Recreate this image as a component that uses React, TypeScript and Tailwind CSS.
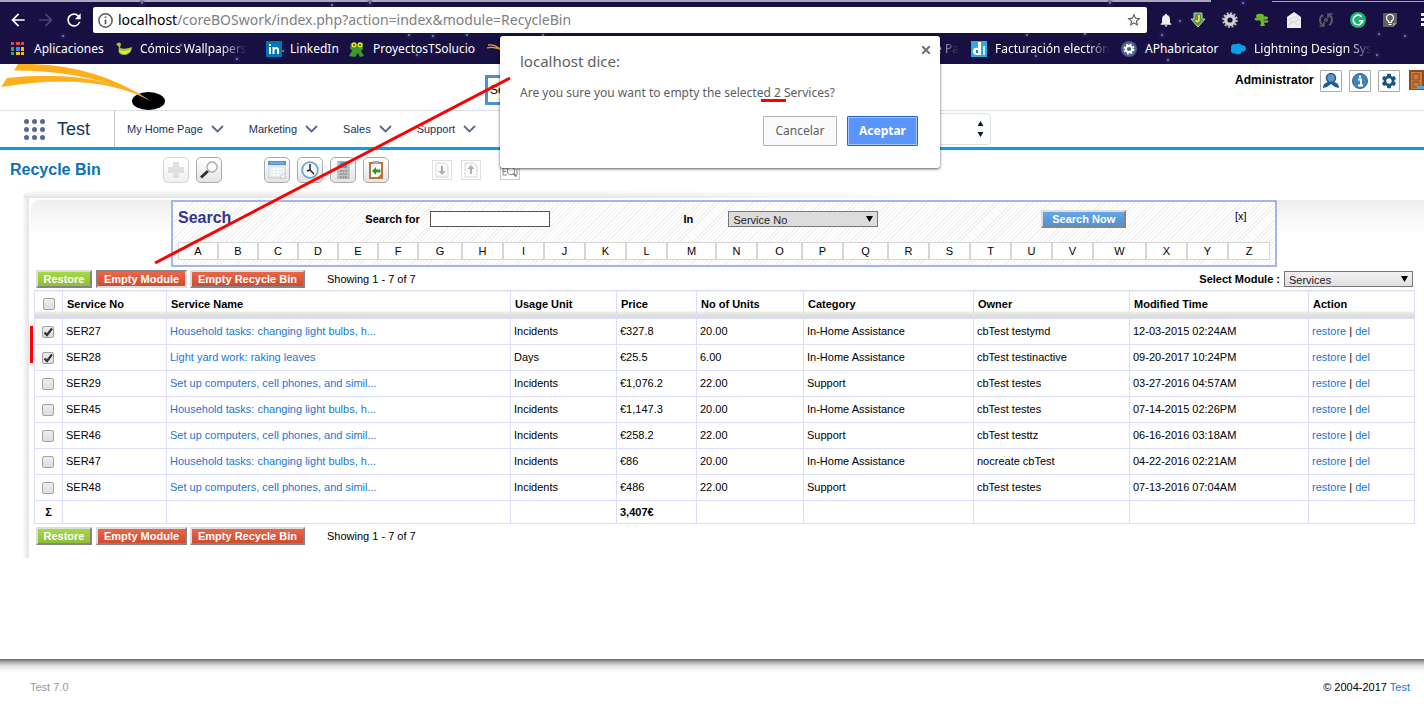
import React from 'react';
import { MdArrowBack, MdArrowForward, MdRefresh, MdStarBorder, MdNotifications, MdSettings } from 'react-icons/md';

const services = [
  ['SER27', 'Household tasks: changing light bulbs, h...', 'Incidents', '€327.8', '20.00', 'In-Home Assistance', 'cbTest testymd', '12-03-2015 02:24AM'],
  ['SER28', 'Light yard work: raking leaves', 'Days', '€25.5', '6.00', 'In-Home Assistance', 'cbTest testinactive', '09-20-2017 10:24PM'],
  ['SER29', 'Set up computers, cell phones, and simil...', 'Incidents', '€1,076.2', '22.00', 'Support', 'cbTest testes', '03-27-2016 04:57AM'],
  ['SER45', 'Household tasks: changing light bulbs, h...', 'Incidents', '€1,147.3', '20.00', 'In-Home Assistance', 'cbTest testes', '07-14-2015 02:26PM'],
  ['SER46', 'Set up computers, cell phones, and simil...', 'Incidents', '€258.2', '22.00', 'Support', 'cbTest testtz', '06-16-2016 03:18AM'],
  ['SER47', 'Household tasks: changing light bulbs, h...', 'Incidents', '€86', '20.00', 'In-Home Assistance', 'nocreate cbTest', '04-22-2016 02:21AM'],
  ['SER48', 'Set up computers, cell phones, and simil...', 'Incidents', '€486', '22.00', 'Support', 'cbTest testes', '07-13-2016 07:04AM'],
];
const columns = ['Service No', 'Service Name', 'Usage Unit', 'Price', 'No of Units', 'Category', 'Owner', 'Modified Time', 'Action'];
const menus = ['My Home Page', 'Marketing', 'Sales', 'Support'];
const letters = 'ABCDEFGHIJKLMNOPQRSTUVWXYZ'.split('');
const stars = [[142, 3], [370, 3], [409, 35], [467, 35], [433, 36], [543, 35], [181, 45], [283, 51], [237, 59], [417, 55], [1110, 3], [1180, 21], [1085, 34], [1162, 35], [1379, 34], [1405, 36], [1027, 35], [1168, 60], [1377, 55], [63, 36], [332, 5], [1243, 3], [1036, 56]];

function BrowserBar() {
  return (
    <div className="relative h-16 overflow-hidden bg-[#180f43] font-['Noto_Sans','Open_Sans',sans-serif] text-white">
      <svg className="absolute inset-0 h-full w-full" aria-hidden="true">
        <path d="M0 0H1211V2H0ZM1272 1H1424V2H1272Z" fill="#a9a6bd" />
        {stars.map(([x, y]) => (
          <g key={x}>
            <circle cx={x} cy={y} r="3" fill="#2b2f70" opacity=".4" />
            <circle cx={x} cy={y} r="1" fill="#8088bb" />
          </g>
        ))}
      </svg>
      <div className="relative mt-[7px] flex h-[26px] items-center pl-2">
        <button aria-label="Back" className="w-7"><MdArrowBack size={20} /></button>
        <button aria-label="Forward" className="w-7 text-[#4d4672]"><MdArrowForward size={20} /></button>
        <button aria-label="Reload" className="w-[29px]"><MdRefresh size={20} /></button>
        <div className="flex h-[26px] flex-1 items-center gap-[5px] rounded-[2px] bg-white px-[5px]">
          <svg width="15" height="15" viewBox="0 0 14 14" fill="none" stroke="#5a5a5a" strokeWidth="1.4"><circle cx="7" cy="7" r="6.2" /><path d="M7 6v4.4M7 3.2v1.5" strokeWidth="1.6" /></svg>
          <div className="flex-1 truncate text-sm text-[#808080]"><span className="text-black">localhost</span>/coreBOSwork/index.php?action=index&amp;module=RecycleBin</div>
          <button aria-label="Bookmark" className="text-[#555]"><MdStarBorder size={16} /></button>
        </div>
        <div className="flex w-[277px] shrink-0 items-center gap-4 overflow-hidden pl-[11px]">
          <MdNotifications size={16} className="shrink-0 text-[#eee]" />
          <svg className="shrink-0" width="16" height="16" viewBox="0 0 16 16"><path d="M4 1h8v6h3l-7 8-7-8h3z" fill="#4f9a48" stroke="#bcd5b5" /><path d="M9 3v5c0 2-3 2-3 0" fill="none" stroke="#ffd24a" strokeWidth="1.8" /></svg>
          <svg className="shrink-0" width="16" height="16" viewBox="0 0 16 16"><circle cx="8" cy="8" r="6.7" fill="none" stroke="#bbb" strokeWidth="2.2" strokeDasharray="2 1.5" /><circle cx="8" cy="8" r="4.3" fill="none" stroke="#d0d0d0" strokeWidth="3.4" /></svg>
          <svg className="shrink-0" width="16" height="16" viewBox="0 0 16 16" fill="#70b62d"><ellipse cx="6" cy="4" rx="4" ry="2.200" /><ellipse cx="11" cy="6" rx="3" ry="1.700" /><ellipse cx="4" cy="7" rx="3.500" ry="1.600" /><ellipse cx="12" cy="9.500" rx="2.500" ry="1.300" /><path d="M7 5h2l1 4 2 0-2 2 1 3H6l1-3-1-3z" /></svg>
          <svg className="shrink-0" width="16" height="16" viewBox="0 0 16 16"><path d="M1 5l7-5 7 5v11H1z" fill="#eee" /><path d="M3 8l6-3 4 3-8 2zM2 13l5-3 6 3" fill="none" stroke="#d8d8d8" /></svg>
          <svg className="shrink-0" width="16" height="16" viewBox="0 0 16 16" fill="none" stroke="#5b5b66" strokeWidth="2"><path d="M5 13.200A6 6 0 0 1 5 2.800M11 2.800A6 6 0 0 1 11 13.200" /><path d="M1.500 14H6v-4M14.500 2H10v4" strokeWidth="1.600" /><circle cx="8" cy="8" r="1.300" strokeWidth="1.500" /></svg>
          <svg className="shrink-0" width="16" height="16" viewBox="0 0 16 16"><circle cx="8" cy="8" r="8" fill="#15b573" /><path d="M11.600 4.800A4.800 4.800 0 1 0 12.700 8.800H9M12.700 8.800L11 11.300" fill="none" stroke="#fff" strokeWidth="1.600" /></svg>
          <svg className="shrink-0" width="16" height="16" viewBox="0 0 16 16"><path d="M1 1h14v10l-4 4H1z" fill="#606060" /><path d="M11 15v-4h4z" fill="#999" /><path d="M6.500 10.500V9a3.500 3.500 0 1 1 3 0v1.500zM6.500 12.500h3" fill="none" stroke="#fff" strokeWidth="1.200" /></svg>
          <svg className="ml-[7px] shrink-0" width="8" height="16" viewBox="0 0 8 16" fill="#eee"><path d="M0 1h3v3H0zM0 6h3v3H0zM0 11h3v3H0z" /></svg>
        </div>
      </div>
      <nav aria-label="Bookmarks" className="relative mt-[7px] flex h-[18px] items-center overflow-hidden pl-[10px] text-xs whitespace-nowrap [&_a]:flex [&_a]:shrink-0 [&_a]:items-center [&_a]:gap-2 [&_svg]:shrink-0">
        <a href="#apps" className="w-[106px]">
          <svg width="16" height="16" viewBox="0 0 16 16"><path d="M1 1h3v3H1zM6 1h4v3H6zM11 1h3v3h-3z" fill="#ea4335" /><path d="M1 6h3v4H1z" fill="#34a853" /><path d="M6 6h4v4H6z" fill="#4285f4" /><path d="M11 6h3v4h-3zM6 11h4v3H6zM11 11h3v3h-3z" fill="#fbbc05" /><path d="M1 11h3v3H1z" fill="#34a853" /></svg>
          Aplicaciones
        </a>
        <a href="#comics" className="w-[150px]">
          <svg width="16" height="16" viewBox="0 0 16 16"><path d="M0 3q4-3 5 0l-1 4q5 2 12-1-1 8-8 8-7 0-5-8z" fill="#a9c832" /><path d="M3 9q6 3 12-1-2 5-7 5-4-1-5-4z" fill="#e0ea3c" /></svg>
          <span className="[mask-image:linear-gradient(90deg,#000_75%,transparent)]">Cómics Wallpapers</span>
        </a>
        <a href="#linkedin" className="w-[83px]"><svg width="16" height="16" viewBox="0 0 16 16"><rect width="16" height="16" rx="1" fill="#0077b5" /><path d="M3 6h2v7H3zM3 3h2v2H3zM6.500 6h2v1q2-2 4 0 .8 1 .5 6h-2V9q-1-2-2.500 0v4h-2z" fill="#fff" /></svg>LinkedIn</a>
        <a href="#proyectos" className="w-[138px]"><svg width="16" height="16" viewBox="0 0 16 16"><path d="M2 2l4-1 2 2 2-2 4 1v6l-2 2 3 5-4 1-2-4-3 4-6-1 3-5-2-3z" fill="#3e9a2e" /><circle cx="5" cy="4" r="2.400" fill="#f0e824" /><circle cx="11" cy="4" r="2.400" fill="#f0e824" /><circle cx="5" cy="4" r="1" fill="#5a3a10" /><circle cx="11" cy="4" r="1" fill="#5a3a10" /></svg>ProyectosTSolucio</a>
        <a href="#corebos" aria-label="coreBOS" className="w-[334px]"><svg width="16" height="16" viewBox="0 0 16 16" fill="none" stroke="#f0a020" strokeWidth="1.300"><path d="M1 4q6-1 14 5M0 7q7-2 15 2" /></svg></a>
        <a href="#pages" className="w-[150px] justify-end pr-3"><span className="[mask-image:linear-gradient(90deg,#000,transparent)]">e Pa</span></a>
        <a href="#factura" className="w-[150px]"><svg width="16" height="16" viewBox="0 0 16 16"><rect width="16" height="16" fill="#30a8e0" /><path d="M7 1h3v13H5q-4-1-3-5 1-3 5-2z" fill="#fff" /><path d="M5 9h2v3H5z" fill="#1b7fc0" /><path d="M12 5h2v9h-2z" fill="#c5ecfb" /></svg>
          <span className="[mask-image:linear-gradient(90deg,#000_80%,transparent)]">Facturación electrón</span>
        </a>
        <a href="#phabricator" className="w-[109px]"><svg width="16" height="16" viewBox="0 0 16 16"><circle cx="8" cy="8" r="8" fill="#4a5f88" /><circle cx="8" cy="8" r="4.700" fill="none" stroke="#fff" strokeWidth="1.600" strokeDasharray="2 1.700" /><circle cx="8" cy="8" r="3.200" fill="none" stroke="#fff" strokeWidth="2.200" /></svg>APhabricator</a>
        <a href="#lightning"><svg width="16" height="16" viewBox="0 0 16 16" fill="#0a9fe0"><circle cx="4.500" cy="6.500" r="3.500" /><circle cx="8.500" cy="6" r="3.500" /><circle cx="12.500" cy="7.500" r="3.300" /><circle cx="4" cy="9.500" r="3" /><circle cx="8" cy="10" r="3.500" /></svg>
          <span className="[mask-image:linear-gradient(90deg,#000_80%,transparent)]">Lightning Design Sys</span>
        </a>
      </nav>
    </div>
  );
}

function HeaderIcon({ label, children }: { label: string; children: React.ReactNode }) {
  return <button aria-label={label} className="h-[22px] w-[22px] shrink-0 rounded-[1px] border border-[#aaa] bg-white p-px">{children}</button>;
}

function AppHeader() {
  return (
    <header className="flex h-[47px] items-start border-b border-[#d8dde6]">
      <svg width="170" height="46" viewBox="0 0 170 46" className="shrink-0">
        <ellipse cx="148.500" cy="37" rx="16.500" ry="9" fill="#000" />
        <path d="M18 0Q92-2 151 37Q92 6 14 6.500Z" fill="#ffae1c" />
        <path d="M7 14Q95 4 151 37Q95 7 1 23Z" fill="#ffae1c" />
      </svg>
      <input aria-label="Search" defaultValue="Se" className="mt-[11px] ml-[315px] h-[30px] w-40 border-[3px] border-[#4f8fd0] bg-[#fffff0] px-[2px] text-xs text-black" />
      <div className="ml-auto flex w-[189px] items-center overflow-hidden pt-[6px]">
        <span className="w-[85px] shrink-0 pb-[3px] text-xs font-bold text-black">Administrator</span>
        <div className="flex shrink-0 gap-[7px]">
          <HeaderIcon label="My profile"><svg viewBox="0 0 18 18"><path d="M1 16q0-5 5-6h6q5 1 5 6l-4-1-4-3-4 3z" fill="#1e5a95" /><circle cx="9" cy="6" r="4.500" fill="#5c97c5" stroke="#1e5a95" strokeWidth="1.500" /></svg></HeaderIcon>
          <HeaderIcon label="Help"><svg viewBox="0 0 18 18"><circle cx="9" cy="9" r="7.500" fill="#4384b7" stroke="#2b6499" /><path d="M7 7.500h3V13M7 13.500h5M9 3.500v2.200" stroke="#fff" strokeWidth="2" fill="none" /></svg></HeaderIcon>
          <HeaderIcon label="Settings"><MdSettings size={18} className="text-[#175682]" /></HeaderIcon>
          <button aria-label="Sign out" className="h-[22px] w-[22px]"><svg viewBox="0 0 22 22"><path d="M2 0h17v20H2z" fill="#94471e" /><path d="M4 2h11v17H4z" fill="#c77b3c" /><path d="M6 4h6v6H6zM6 12h6v5H6z" fill="none" stroke="#934a1f" /><path d="M10 16h12v3H10z" fill="#50a9de" /></svg></button>
        </div>
      </div>
    </header>
  );
}

function MainNav() {
  return (
    <nav className="flex h-[39px] items-center border-b-[3px] border-[#0b9fde] text-[#16325c]">
      <div className="flex h-full w-[115px] shrink-0 items-center gap-3 border-r border-[#c5c5c9] pl-6">
        <svg width="21" height="21" viewBox="0 0 21 21" fill="#54698d">
          {[2.5, 10.5, 18.5].map((y) => [2.5, 10.5, 18.5].map((x) => <circle key={`${x}-${y}`} cx={x} cy={y} r="2.500" />))}
        </svg>
        <span className="text-lg">Test</span>
      </div>
      <div className="flex gap-[25px] pl-3 text-[11px]">
        {menus.map((m) => (
          <a key={m} href={`#${m}`} className="flex items-center gap-2">{m}
            <svg width="13" height="8" viewBox="0 0 13 8" fill="none" stroke="#54698d" strokeWidth="1.800"><path d="M1 1l5.500 5.500L12 1" /></svg>
          </a>
        ))}
      </div>
      <button aria-label="Select view" className="ml-11 flex h-8 w-[471px] items-center justify-end rounded-[4px] border border-[#d8dde6] pr-[6px]">
        <svg width="7" height="16" viewBox="0 0 7 16" fill="#061c3f"><path d="M3.500 0L6.500 5h-6zM3.500 16l3-5h-6z" /></svg>
      </button>
    </nav>
  );
}

function ToolButton({ label, faded, children }: { label: string; faded?: boolean; children: React.ReactNode }) {
  return (
    <button aria-label={label} className={`h-[26px] w-[26px] shrink-0 rounded-[5px] border border-[#aaa] bg-gradient-to-b from-white to-[#e4e4e4] p-[3px] ${faded ? 'opacity-50' : ''}`}>
      {children}
    </button>
  );
}

function Toolbar() {
  return (
    <div className="flex h-[41px] items-center pb-[2px] pl-[10px]">
      <h1 className="w-[153px] text-base font-bold text-[#0b72b8]">Recycle Bin</h1>
      <div className="flex gap-[7px]">
        <ToolButton label="Create" faded><svg viewBox="0 0 18 18"><path d="M6 1h6v5h5v6h-5v5H6v-5H1V6h5z" fill="#c0c0c0" /></svg></ToolButton>
        <ToolButton label="Find"><svg viewBox="0 0 18 18"><path d="M1 16.500L8 10" stroke="#333" strokeWidth="3" /><circle cx="12" cy="6" r="5" fill="#fafafa" stroke="#aaa" strokeWidth="1.300" /></svg></ToolButton>
      </div>
      <div className="ml-[42px] flex gap-[7px]">
        <ToolButton label="Calendar"><svg viewBox="0 0 18 18"><path d="M0 1h18v16H0z" fill="#e6e9ee" stroke="#c6ccd5" /><path d="M0 0h18v4H0z" fill="#4f96d2" /><path d="M2 2h14" stroke="#93c4ea" /><path d="M2 8h14M2 11h14M2 14h9M6 6v9M10 6v9" stroke="#fff" /><path d="M12 17l5-5v5z" fill="#fff" stroke="#bbb" strokeWidth=".6" /></svg></ToolButton>
        <ToolButton label="Clock"><svg viewBox="0 0 18 18"><circle cx="9" cy="9" r="7.800" fill="#f5fbff" stroke="#6fa6c8" strokeWidth="1.800" /><path d="M9 3v6l4 4M9 9l-3 1" fill="none" stroke="#222" strokeWidth="1.500" /></svg></ToolButton>
        <ToolButton label="Calculator"><svg viewBox="0 0 18 18"><path d="M4 0h11v18H4z" fill="#c4c4c4" stroke="#a5a5a5" /><path d="M6 1h7v6H6z" fill="#45a5dd" /><path d="M6 10h7M6 13h7M6 16h7" stroke="#888" strokeWidth="1.600" strokeDasharray="1.800 .8" /></svg></ToolButton>
        <ToolButton label="Last viewed"><svg viewBox="0 0 18 18"><path d="M2 1h14v17H2z" fill="#b8753b" /><path d="M4 3h10v10l-3 3H4z" fill="#fff" /><path d="M6 0h6v3H6z" fill="#aaa" /><path d="M5 10l4-4v2.500h4.500v3H9V14z" fill="#27a022" /></svg></ToolButton>
      </div>
      <div className="ml-[43px] flex gap-[9px] [&_button]:h-5 [&_button]:w-5 [&_button]:border [&_button]:border-[#ccc]">
        <button aria-label="Import" className="opacity-60"><svg viewBox="0 0 18 18"><path d="M3 2h9l3 3v11H3z" fill="#fafafa" stroke="#bbb" /><path d="M8 5h2v5h2.500L9 14l-3.500-4H8z" fill="#777" /></svg></button>
        <button aria-label="Export" className="mr-[10px] opacity-60"><svg viewBox="0 0 18 18"><path d="M3 2h9l3 3v11H3z" fill="#fafafa" stroke="#bbb" /><path d="M8 13h2V8h2.500L9 4 5.500 8H8z" fill="#777" /></svg></button>
        <button aria-label="Find duplicates"><svg viewBox="0 0 18 18" fill="none" stroke="#888"><path d="M6 7H2v7h4M2 10.500h3M16 8v6" /><circle cx="10" cy="10" r="3.800" /><path d="M12.500 12.500l3 3" strokeWidth="2" /></svg></button>
      </div>
    </div>
  );
}

function Select({ id, value, className }: { id: string; value: string; className: string }) {
  return (
    <div className={`relative ${className}`}>
      <select id={id} className="h-full w-full appearance-none border border-[#777] bg-transparent pb-[2px] pl-1 text-[11px] text-[#222]"><option>{value}</option></select>
      <svg className="pointer-events-none absolute top-[5px] right-[5px]" width="7" height="6" viewBox="0 0 7 6"><path d="M0 0h7L3.500 6z" /></svg>
    </div>
  );
}

function SearchPanel() {
  return (
    <section className="mr-[138px] ml-[137px] border-2 border-[#a5b4ea] bg-[repeating-linear-gradient(135deg,#fff_0px,#fff_2px,#f0f0f0_2px,#f0f0f0_3px)] px-[5px] pt-[6px] pb-[5px] text-[11px]">
      <div className="grid h-[34px] grid-cols-[252fr_254fr_45fr_313fr_194fr_35fr] items-start">
        <div className="flex justify-between pr-[10px]">
          <h2 className="text-base leading-5 font-bold text-[#34348e]">Search</h2>
          <label htmlFor="search-text" className="pt-[1px] leading-5 font-bold">Search for</label>
        </div>
        <div className="flex justify-between pt-[3px]"><input id="search-text" className="h-4 w-[120px] border border-[#555] bg-white" /></div>
        <label htmlFor="search-field" className="pt-[1px] leading-5 font-bold">In</label>
        <Select id="search-field" value="Service No" className="mt-[3px] h-4 w-[150px] bg-[#dcdcdc]" />
        <div className="pt-[2px]"><button className="flex h-[18px] w-[85px] items-center justify-center border-2 border-t-[#ddd] border-r-[#858585] border-b-[#858585] border-l-[#ddd] bg-gradient-to-b from-[#65a6e6] to-[#5093d2] font-bold text-white">Search Now</button></div>
        <button className="text-left leading-4">[x]</button>
      </div>
      <div className="grid grid-cols-[40fr_40fr_40fr_40fr_40fr_40fr_44fr_41fr_41fr_41fr_41fr_41fr_49fr_41fr_45fr_41fr_45fr_41fr_41fr_41fr_41fr_41fr_53fr_41fr_41fr_42fr]">
        {letters.map((l) => <button key={l} className="h-[18px] min-w-0 border border-[#d6d6d6] bg-white leading-4">{l}</button>)}
      </div>
    </section>
  );
}

function ActionBar({ pressed, children }: { pressed?: boolean; children?: React.ReactNode }) {
  const raised = 'border-t-[#ddd] border-l-[#ddd] border-r-[#858585] border-b-[#858585]';
  const sunken = 'border-t-[#858585] border-l-[#858585] border-r-[#ddd] border-b-[#ddd]';
  const base = 'flex h-[18px] items-center justify-center border-2 bg-gradient-to-b font-bold text-white';
  return (
    <div className="flex h-[23px] items-center pt-px pl-[2px] text-[11px]">
      <button className={`${base} ${raised} w-14 from-[#a5da43] to-[#8fbd3a]`}>Restore</button>
      <button className={`${base} ${pressed ? sunken : raised} ml-1 w-[91px] from-[#ea6549] to-[#cf4c2e]`}>Empty Module</button>
      <button className={`${base} ${raised} ml-[3px] w-[115px] from-[#ea6549] to-[#cf4c2e]`}>Empty Recycle Bin</button>
      <span className="ml-[22px]">Showing 1 - 7 of 7</span>
      {children}
    </div>
  );
}

function Check({ label, checked }: { label: string; checked?: boolean }) {
  return (
    <span className="relative block h-3 w-3">
      <input type="checkbox" aria-label={label} defaultChecked={checked} className="peer block h-3 w-3 appearance-none rounded-[2px] border border-[#a3a3a3] bg-gradient-to-b from-[#eee] to-[#dcdcdc]" />
      <svg className="pointer-events-none absolute inset-0 hidden peer-checked:block" width="12" height="12" viewBox="0 0 12 12" fill="none" stroke="#333" strokeWidth="2.200"><path d="M2.500 6.500l2.500 2.500 5-6.500" /></svg>
    </span>
  );
}

function ServiceTable() {
  return (
    <table className="w-full table-fixed border-collapse text-left text-[11px] [&_td]:border [&_td]:border-[#dcdcfb] [&_td]:px-[3px] [&_td]:py-0 [&_th]:border [&_th]:border-[#dcdcfb] [&_th]:pt-0 [&_th]:pb-px">
      <colgroup>
        <col className="w-7" /><col className="w-[104px]" /><col /><col className="w-[106px]" /><col className="w-20" /><col className="w-[107px]" /><col className="w-[170px]" /><col className="w-[156px]" /><col className="w-[179px]" /><col className="w-[106px]" />
      </colgroup>
      <thead>
        <tr className="h-7">
          <th className="bg-[linear-gradient(#fff_20px,#eeeeea_20px,#d6d6d2_26px,#dcdcfb_26px)] pl-2"><Check label="Select all" /></th>
          {columns.map((c) => <th key={c} className="bg-[linear-gradient(#fff_20px,#eeeeea_20px,#d6d6d2_26px,#dcdcfb_26px)] pl-1 font-bold">{c}</th>)}
        </tr>
      </thead>
      <tbody>
        {services.map((row, i) => (
          <tr key={row[0]} className="h-[26px]">
            <td><div className="pl-1"><Check label={`Select ${row[0]}`} checked={i < 2} /></div></td>
            {row.map((value, j) => <td key={j} className="truncate">{j === 1 ? <a href={`#${row[0]}`} className="text-[#1b76d2]">{value}</a> : value}</td>)}
            <td><a href="#restore" className="text-[#1b76d2]">restore</a> | <a href="#del" className="text-[#1b76d2]">del</a></td>
          </tr>
        ))}
        <tr className="h-[23px] font-bold">
          <td className="text-center">Σ</td><td /><td /><td /><td>3,407€</td><td /><td /><td /><td /><td />
        </tr>
      </tbody>
    </table>
  );
}

function ConfirmDialog() {
  return (
    <div role="dialog" aria-label="localhost dice:" className="absolute top-9 left-[500px] w-[440px] rounded-[3px] bg-white px-5 pt-[14px] pb-[22px] font-['Noto_Sans','Open_Sans',sans-serif] text-xs text-[#5e5e5e] shadow-[0_1px_3px_rgba(0,0,0,.65)]">
      <h2 className="text-[15px] leading-[22px]">localhost dice:</h2>
      <button aria-label="Close" className="absolute top-[10px] right-[10px]"><svg width="8" height="8" viewBox="0 0 8 8" stroke="#707070" strokeWidth="2"><path d="M0 0l8 8M8 0L0 8" /></svg></button>
      <p className="mt-3 leading-[18px]">Are you sure you want to empty the selected 2 Services?</p>
      <div className="mt-[14px] flex justify-end gap-[10px] pr-[2px]">
        <button className="h-[30px] w-[74px] rounded-[1px] border border-[#b3b3b3] bg-[#fafafa]">Cancelar</button>
        <button className="h-[30px] w-[71px] rounded-[1px] border border-[#2c63c4] bg-[#5995fc] font-bold text-white shadow-[inset_0_0_0_1px_#a3c4ff]">Aceptar</button>
      </div>
    </div>
  );
}

export default function App() {
  return (
    <div className="relative min-h-screen overflow-x-hidden bg-white font-['Liberation_Sans',Arial,sans-serif] text-black">
      <BrowserBar />
      <AppHeader />
      <MainNav />
      <Toolbar />
      <main className="ml-[23px]">
        <div className="h-[7px] rounded-tl-[10px] bg-[linear-gradient(90deg,transparent_40%,#fff_68%),linear-gradient(#fcfcfc,#e3e3e3)]" />
        <div className="bg-[linear-gradient(90deg,#fafafa,#e3e3e3_6px,transparent_6px)] pl-[6px]">
          <div className="rounded-tl-[10px] border-t-2 border-l-2 border-white bg-[linear-gradient(#efefef,#fff_36px)] pr-[9px] pb-[11px] pl-[3px]">
            <SearchPanel />
            <ActionBar pressed>
              <label htmlFor="module" className="mr-1 ml-auto font-bold">Select Module :</label>
              <Select id="module" value="Services" className="mr-[2px] h-4 w-[129px] bg-gradient-to-b from-[#f3f3f3] to-[#dedede]" />
            </ActionBar>
            <ServiceTable />
            <ActionBar />
          </div>
        </div>
      </main>
      <footer className="mt-[101px] flex justify-between bg-[linear-gradient(#666,#aaa_3px,#e3e3e3_7px,#fff_13px)] pt-5 pr-[14px] pb-4 pl-[30px] text-[11px] leading-4">
        <span className="text-[#999]">Test 7.0</span>
        <span>© 2004-2017 <a href="#test" className="text-[#1b76d2]">Test</a></span>
      </footer>
      <ConfirmDialog />
      <svg className="pointer-events-none absolute top-0 left-0" width="800" height="370" fill="none" stroke="#f00" strokeWidth="3" aria-hidden="true">
        <path d="M155 263L510 78M761 100.500H786M31.500 326V363" />
      </svg>
    </div>
  );
}
